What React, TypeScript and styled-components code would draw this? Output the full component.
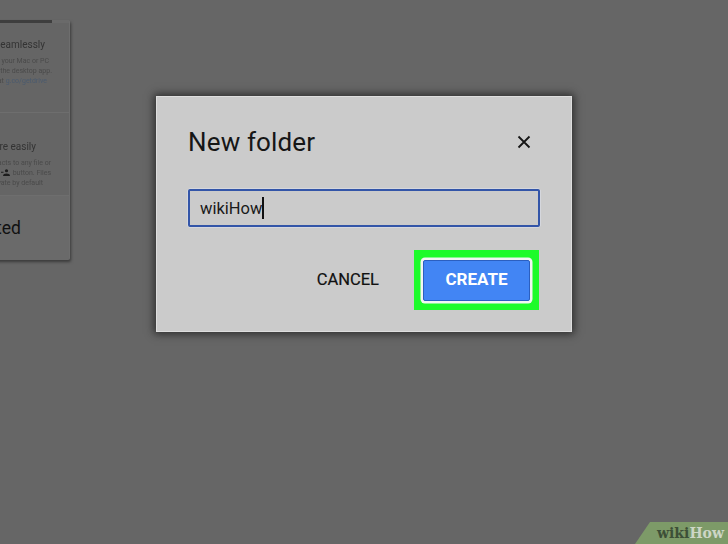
import React from 'react'
import styled, { createGlobalStyle } from 'styled-components'

const GlobalStyle = createGlobalStyle`
  html, body {
    margin: 0;
    padding: 0;
    background: #666666;
    overflow: hidden;
  }
`

const Page = styled.div`
  position: relative;
  width: 728px;
  height: 544px;
  padding-top: 20px;
  box-sizing: border-box;
  background: #666666;
  overflow: hidden;
  font-family: Roboto, 'Liberation Sans', sans-serif;
`

const SideCard = styled.div`
  width: 270px;
  height: 240px;
  margin-left: -200px;
  background: #6a6a6a;
  border-right: 1px solid #6e6e6e;
  border-radius: 2px;
  box-shadow: 1px 2px 3px rgba(30, 30, 30, 0.6);
  display: flex;
  flex-direction: column;
  box-sizing: border-box;
`

const ProgressBar = styled.div`
  width: 252px;
  height: 3px;
  background: #3e3e3e;
  flex: none;
`

const Tip = styled.div<{ $height: number; $top: number }>`
  height: ${(p) => p.$height}px;
  padding: ${(p) => p.$top}px 3px 0 0;
  box-sizing: border-box;
  border-bottom: 1px solid #6e6e6e;
  background: #656565;
  text-align: right;
  white-space: nowrap;
  flex: none;
`

const TipTitle = styled.div<{ $pad: number }>`
  font-size: 10px;
  line-height: 14px;
  color: #333333;
  padding-right: ${(p) => p.$pad}px;
  margin-bottom: 4px;
  filter: blur(0.3px);
`

const TipLine = styled.div<{ $pad: number }>`
  font-size: 7px;
  line-height: 10px;
  color: #4a4a4a;
  padding-right: ${(p) => p.$pad}px;
  filter: blur(0.5px);
`

const TipLink = styled.span`
  color: #4a5a6e;
`

const PersonIcon = styled.svg`
  width: 9px;
  height: 7px;
  vertical-align: -1px;
  margin: 0 1px;
`

const CardFooter = styled.div`
  flex: 1;
  display: flex;
  align-items: center;
  justify-content: flex-end;
  padding: 0 48px 1px 0;
  font-size: 17.5px;
  color: #111111;
  white-space: nowrap;
`

const Overlay = styled.div`
  position: absolute;
  inset: 0;
  display: flex;
  justify-content: center;
  align-items: flex-start;
  padding-top: 96px;
`

const Dialog = styled.div`
  width: 416px;
  height: 236px;
  box-sizing: border-box;
  padding: 27px 31px 21px;
  background: #cbcbcb;
  border: 1px solid #dedede;
  box-shadow: 0 0 8px 2px rgba(25, 25, 25, 0.75);
  display: flex;
  flex-direction: column;
`

const Header = styled.div`
  display: flex;
  align-items: center;
  justify-content: space-between;
  height: 36px;
  padding-right: 8px;
`

const Title = styled.div`
  font-size: 26px;
  color: #161616;
  letter-spacing: 0.15px;
`

const CloseIcon = styled.svg`
  width: 16px;
  height: 16px;
`

const NameInput = styled.div`
  margin-top: 30px;
  height: 38px;
  box-sizing: border-box;
  border: 2px solid #3355a8;
  border-radius: 2px;
  box-shadow: 0 0 0 0.5px #dfe4ef;
  padding: 0 10px;
  display: flex;
  align-items: center;
  font-size: 16.5px;
  color: #1a1a1a;
`

const Caret = styled.span`
  width: 1.5px;
  height: 22px;
  background: #111111;
`

const Actions = styled.div`
  margin-top: 23px;
  margin-right: 1px;
  display: flex;
  align-items: center;
  justify-content: flex-end;
  gap: 35px;
`

const CancelButton = styled.div`
  font-size: 16.5px;
  color: #111111;
  -webkit-text-stroke: 0.2px #111111;
  padding-bottom: 2px;
`

const Highlight = styled.div`
  width: 125px;
  height: 60px;
  box-sizing: border-box;
  background: #1dfb2a;
  display: flex;
  align-items: center;
  justify-content: center;
`

const CreateButton = styled.div`
  width: 107px;
  height: 41px;
  box-sizing: border-box;
  padding-bottom: 2px;
  background: #4285f4;
  border: 1px solid #2b5fc0;
  border-radius: 2px;
  box-shadow: 0 0 0 2.5px #f2f6f2;
  color: #ffffff;
  font-size: 17px;
  font-weight: 700;
  display: flex;
  align-items: center;
  justify-content: center;
`

const Watermark = styled.div`
  position: absolute;
  right: 0;
  bottom: 0;
  width: 93px;
  height: 22px;
  background: #7d9a68;
  clip-path: polygon(15px 0, 100% 0, 100% 100%, 0 100%);
  display: flex;
  align-items: center;
  justify-content: flex-end;
  padding-right: 4px;
  box-sizing: border-box;
  font-family: 'DejaVu Serif', 'Liberation Serif', serif;
  font-size: 14px;
  font-weight: 700;
  line-height: 1;
`

const WikiPart = styled.span`
  color: #3d4f37;
`

const HowPart = styled.span`
  color: #cdd6c6;
`

const App = () => {
  return (
    <Page>
      <GlobalStyle />
      <SideCard>
        <ProgressBar />
        <Tip $height={90} $top={15}>
          <TipTitle $pad={21}>Sync files seamlessly</TipTitle>
          <TipLine $pad={17}>Sync files from your Mac or PC</TipLine>
          <TipLine $pad={14}>to Drive using the desktop app.</TipLine>
          <TipLine $pad={19}>
            Download it at <TipLink>g.co/getdrive</TipLink>
          </TipLine>
        </Tip>
        <Tip $height={83} $top={27}>
          <TipTitle $pad={30}>Share easily</TipTitle>
          <TipLine $pad={15}>Add contacts to any file or</TipLine>
          <TipLine $pad={15}>
            with the{' '}
            <PersonIcon viewBox="0 0 18 14">
              <circle cx="11" cy="3.5" r="3.2" fill="#1d1d1d" />
              <path d="M4 14c0-3.5 3.5-5 7-5s7 1.500 7 5z" fill="#1d1d1d" />
              <path d="M0 5.500h5v2H0z" fill="#1d1d1d" />
            </PersonIcon>{' '}
            button. Files
          </TipLine>
          <TipLine $pad={23}>are private by default</TipLine>
        </Tip>
        <CardFooter>Get started</CardFooter>
      </SideCard>
      <Overlay>
        <Dialog>
          <Header>
            <Title>New folder</Title>
            <CloseIcon viewBox="0 0 16 16">
              <path d="M2.500 2.500l11 11M13.500 2.500l-11 11" stroke="#161616" strokeWidth="1.800" fill="none" />
            </CloseIcon>
          </Header>
          <NameInput>
            wikiHow
            <Caret />
          </NameInput>
          <Actions>
            <CancelButton>CANCEL</CancelButton>
            <Highlight>
              <CreateButton>CREATE</CreateButton>
            </Highlight>
          </Actions>
        </Dialog>
      </Overlay>
      <Watermark>
        <WikiPart>wiki</WikiPart>
        <HowPart>How</HowPart>
      </Watermark>
    </Page>
  )
}

export default App
